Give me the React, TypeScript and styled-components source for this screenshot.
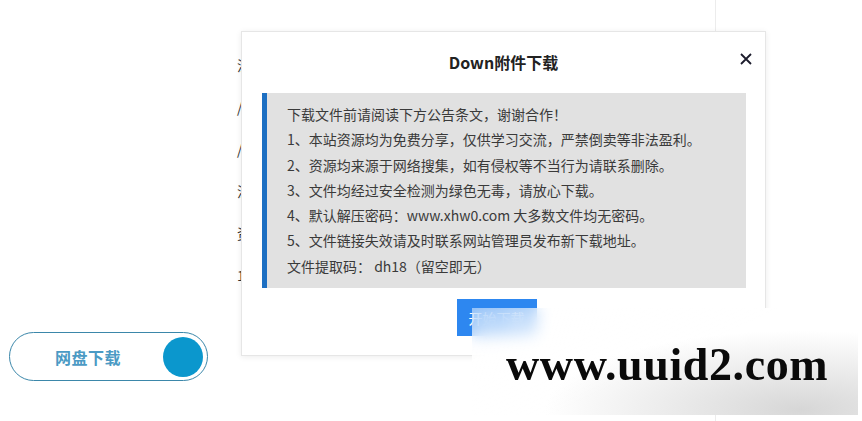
import styled, { createGlobalStyle } from 'styled-components';

const GlobalStyle = createGlobalStyle`
  * { box-sizing: border-box; }
  body {
    margin: 0;
    background: #fff;
    font-family: "Noto Sans CJK SC", "Noto Sans", sans-serif;
  }
`;

const Page = styled.div`
  position: relative;
  width: 862px;
  height: 421px;
  overflow: hidden;
  display: flex;
  background: #fff;
`;

const Main = styled.div`
  width: 716px;
  display: flex;
  border-right: 1px solid #ececec;
`;

const Side = styled.div`
  flex: 1;
`;

const LeftCol = styled.div`
  width: 237px;
  padding: 332px 0 0 9px;
`;

const PillButton = styled.div`
  width: 199px;
  height: 49px;
  border: 1.5px solid #3b87aa;
  border-radius: 25px;
  display: flex;
  align-items: center;
  justify-content: space-between;
  padding: 0 4px 0 45px;
`;

const PillText = styled.span`
  font-size: 16px;
  font-weight: 700;
  color: #4b9ac4;
  letter-spacing: 0.5px;
`;

const PillDot = styled.span`
  width: 40px;
  height: 40px;
  border-radius: 50%;
  background: #0b97cd;
`;

const TextCol = styled.div`
  padding-top: 56px;
  display: flex;
  flex-direction: column;
  gap: 23px;
  font-size: 14px;
  color: #333;
  line-height: 19px;
  white-space: nowrap;
`;

const Modal = styled.div`
  position: absolute;
  left: 241px;
  top: 31px;
  width: 525px;
  height: 325px;
  background: #fff;
  border: 1px solid #e6e6e6;
  box-shadow: 0 1px 6px rgba(0, 0, 0, 0.08);
  display: flex;
  flex-direction: column;
  align-items: center;
`;

const Header = styled.div`
  position: relative;
  width: 100%;
  height: 61px;
  display: flex;
  align-items: center;
  justify-content: center;
  padding-bottom: 2px;
`;

const Title = styled.h3`
  margin: 0;
  font-size: 16px;
  font-weight: 700;
  color: #222;
`;

const Close = styled.span`
  position: absolute;
  right: 13px;
  top: 21px;
  width: 12px;
  height: 12px;
  display: flex;
`;

const Notice = styled.div`
  width: 484px;
  margin-left: 1px;
  height: 195px;
  background: #e1e1e1;
  border-left: 5px solid #1d6fc2;
  padding: 9px 0 0 20px;
  font-size: 14px;
  line-height: 25.3px;
  color: #3a3a3a;
`;

const Line = styled.div`
  white-space: nowrap;
`;

const StartButton = styled.div`
  margin-top: 11px;
  margin-right: 14px;
  width: 80px;
  height: 37px;
  background: #2d87f0;
  color: #fff;
  font-size: 14px;
  display: flex;
  align-items: center;
  justify-content: center;
`;

const Watermark = styled.div`
  position: absolute;
  left: 472px;
  top: 308px;
  width: 386px;
  height: 107px;
  backdrop-filter: blur(8px);
  background:
    radial-gradient(ellipse at 85% 95%, rgba(210, 210, 210, 0.9) 0%, rgba(255, 255, 255, 0) 55%),
    linear-gradient(155deg, rgba(255, 255, 255, 0.45) 0%, rgba(255, 255, 255, 0.95) 28%, #fff 50%);
  display: flex;
  align-items: center;
  padding: 0 0 0 34px;
`;

const WatermarkText = styled.span`
  font-family: "Liberation Serif", "Times New Roman", serif;
  font-weight: 700;
  font-size: 46px;
  letter-spacing: 0.6px;
  color: #0a0a0a;
  margin-top: 6px;
`;

const lines = [
  '下载文件前请阅读下方公告条文，谢谢合作！',
  '1、本站资源均为免费分享，仅供学习交流，严禁倒卖等非法盈利。',
  '2、资源均来源于网络搜集，如有侵权等不当行为请联系删除。',
  '3、文件均经过安全检测为绿色无毒，请放心下载。',
  '4、默认解压密码：www.xhw0.com 大多数文件均无密码。',
  '5、文件链接失效请及时联系网站管理员发布新下载地址。',
  '文件提取码： dh18（留空即无）',
];

const behind = ['注意事项', '/', '/', '注', '资源', '1.1'];

export default function App() {
  return (
    <>
      <GlobalStyle />
      <Page>
        <Main>
          <LeftCol>
            <PillButton>
              <PillText>网盘下载</PillText>
              <PillDot />
            </PillButton>
          </LeftCol>
          <TextCol>
            {behind.map((t, i) => (
              <span key={i}>{t}</span>
            ))}
          </TextCol>
        </Main>
        <Side />
        <Modal>
          <Header>
            <Title>Down附件下载</Title>
            <Close>
              <svg width="12" height="12" viewBox="0 0 12 12">
                <path d="M1 1L11 11M11 1L1 11" stroke="#1c1c2c" strokeWidth="1.8" />
              </svg>
            </Close>
          </Header>
          <Notice>
            {lines.map((l) => (
              <Line key={l}>{l}</Line>
            ))}
          </Notice>
          <StartButton>开始下载</StartButton>
        </Modal>
        <Watermark>
          <WatermarkText>www.uuid2.com</WatermarkText>
        </Watermark>
      </Page>
    </>
  );
}
